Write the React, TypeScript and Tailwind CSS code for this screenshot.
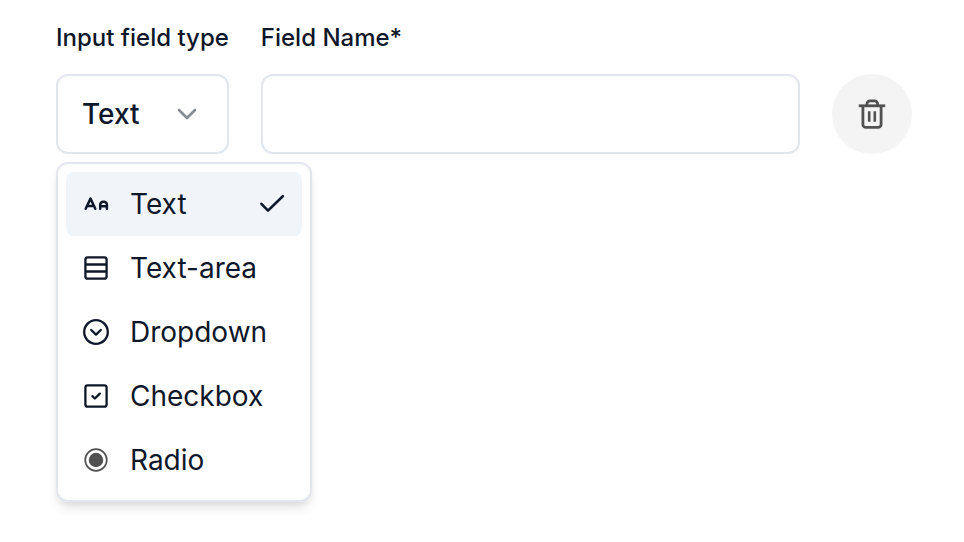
import React, { useState } from 'react';

interface IconProps {
  className?: string;
}

interface FieldType {
  id: string;
  name: string;
  icon: React.FC<IconProps>;
}

const TextIcon: React.FC<IconProps> = ({ className = '' }) => (
  <svg viewBox="0 0 28 28" fill="none" stroke="currentColor" strokeWidth="2.5" strokeLinecap="round" strokeLinejoin="round" className={className}>
    <path d="M3.7 18.8L8.5 8.6L13.3 18.8M5.2 16H11.8" />
    <path d="M18.2 18.8V14.8A3 3 0 0 1 21.2 11.8H21.9A3 3 0 0 1 24.9 14.8V18.8M18.2 16.2H24.9" />
  </svg>
);

const TextAreaIcon: React.FC<IconProps> = ({ className = '' }) => (
  <svg viewBox="0 0 28 28" fill="none" stroke="currentColor" strokeWidth="2.3" className={className}>
    <rect x="3.4" y="3.4" width="21.2" height="21.2" rx="2.2" />
    <path d="M3 10.5H25M3 17.5H25" />
  </svg>
);

const DropdownIcon: React.FC<IconProps> = ({ className = '' }) => (
  <svg viewBox="0 0 28 28" fill="none" stroke="currentColor" strokeWidth="2.3" strokeLinecap="round" strokeLinejoin="round" className={className}>
    <circle cx="14" cy="14" r="11.8" />
    <path d="M9.2 12L14 16.6L18.8 12" />
  </svg>
);

const CheckboxIcon: React.FC<IconProps> = ({ className = '' }) => (
  <svg viewBox="0 0 28 28" fill="none" stroke="currentColor" strokeWidth="2.3" strokeLinecap="round" strokeLinejoin="round" className={className}>
    <rect x="3.4" y="3.4" width="21.2" height="21.2" rx="2.2" />
    <path d="M10.4 14.2L12.9 16.5L17.8 11.6" />
  </svg>
);

const RadioIcon: React.FC<IconProps> = ({ className = '' }) => (
  <svg viewBox="0 0 28 28" className={className}>
    <circle cx="14" cy="14" r="10.8" fill="none" stroke="#515151" strokeWidth="1.7" />
    <circle cx="14" cy="14" r="7.2" fill="#515151" />
  </svg>
);

const CheckIcon: React.FC<IconProps> = ({ className = '' }) => (
  <svg viewBox="0 0 28 28" fill="none" stroke="currentColor" strokeWidth="2.6" strokeLinecap="round" strokeLinejoin="round" className={className}>
    <path d="M3.4 13.8L10 20.6L24.8 6.2" />
  </svg>
);

const ChevronIcon: React.FC<IconProps> = ({ className = '' }) => (
  <svg viewBox="0 0 24 24" fill="none" stroke="currentColor" strokeWidth="2.6" strokeLinecap="round" strokeLinejoin="round" className={className}>
    <path d="M4 8L12 16L20 8" />
  </svg>
);

const TrashIcon: React.FC<IconProps> = ({ className = '' }) => (
  <svg viewBox="0 0 32 32" fill="none" stroke="currentColor" strokeWidth="2.8" className={className}>
    <path d="M2.8 7.8H29.2" />
    <path d="M11 7.5V5.8A3 3 0 0 1 14 2.8H18.6A3 3 0 0 1 21.6 5.8V7.5" />
    <path d="M6.9 8V26.4A3 3 0 0 0 9.9 29.4H22.1A3 3 0 0 0 25.1 26.4V8" />
    <path d="M13.2 13.2V23.8M18.8 13.2V23.8" strokeWidth="2.6" />
  </svg>
);

const fieldTypes: FieldType[] = [
  { id: 'text', name: 'Text', icon: TextIcon },
  { id: 'text-area', name: 'Text-area', icon: TextAreaIcon },
  { id: 'dropdown', name: 'Dropdown', icon: DropdownIcon },
  { id: 'checkbox', name: 'Checkbox', icon: CheckboxIcon },
  { id: 'radio', name: 'Radio', icon: RadioIcon },
];

const App: React.FC = () => {
  const [isOpen, setIsOpen] = useState(true);
  const [selectedType, setSelectedType] = useState('text');
  const [fieldName, setFieldName] = useState('');

  const handleSelect = (id: string) => {
    setSelectedType(id);
    setIsOpen(false);
  };

  return (
    <div className="min-h-screen bg-white pt-[22px] pl-14 pr-[52px] font-['Inter',sans-serif] text-[#0f172a]">
      <div className="flex items-end gap-8">
        <div className="flex shrink-0 flex-col gap-5">
          <label htmlFor="field-type" className="text-2xl font-medium">
            Input field type
          </label>
          <div className="relative">
            <button
              id="field-type"
              type="button"
              aria-haspopup="listbox"
              aria-expanded={isOpen}
              onClick={() => setIsOpen(!isOpen)}
              className="flex h-20 w-full items-center justify-between rounded-xl border-2 border-[#e2e7ed] bg-white pl-6 pr-7 text-[28px] font-medium"
            >
              {fieldTypes.find((type) => type.id === selectedType)?.name}
              <ChevronIcon className="size-6 text-[#878b94]" />
            </button>

            {isOpen && (
              <div
                role="listbox"
                aria-label="Input field type"
                className="absolute top-full left-0 z-10 mt-2 w-64 rounded-xl border-2 border-[#e2e7ed] bg-white p-2 shadow-[0_8px_12px_-2px_rgba(0,0,0,0.1),0_4px_8px_-4px_rgba(0,0,0,0.1)]"
              >
                {fieldTypes.map(({ id, name, icon: Icon }) => (
                  <button
                    key={id}
                    type="button"
                    role="option"
                    aria-selected={id === selectedType}
                    onClick={() => handleSelect(id)}
                    className={`flex h-16 w-full items-center gap-5 rounded-lg px-4 text-left text-[28px] ${
                      id === selectedType ? 'bg-[#f1f5fa]' : 'hover:bg-slate-50'
                    }`}
                  >
                    <Icon className="size-7 shrink-0" />
                    <span className="flex-1">{name}</span>
                    {id === selectedType && <CheckIcon className="size-7 shrink-0" />}
                  </button>
                ))}
              </div>
            )}
          </div>
        </div>

        <div className="flex min-w-0 flex-1 flex-col gap-5">
          <label htmlFor="field-name" className="text-2xl font-medium">
            Field Name*
          </label>
          <input
            id="field-name"
            type="text"
            required
            value={fieldName}
            onChange={(e) => setFieldName(e.target.value)}
            className="h-20 w-full rounded-xl border-2 border-[#e2e7ed] bg-white px-6 text-[28px] outline-none focus:border-slate-400"
          />
        </div>

        <button
          type="button"
          aria-label="Delete field"
          className="flex size-20 shrink-0 items-center justify-center rounded-full bg-[#f4f4f4] text-[#515151] hover:bg-gray-200"
        >
          <TrashIcon className="size-8" />
        </button>
      </div>
    </div>
  );
};

export default App;
